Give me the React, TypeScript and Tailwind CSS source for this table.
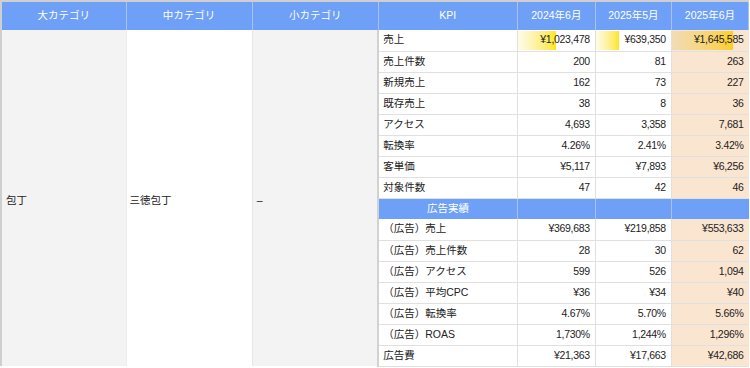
import type { CSSProperties } from 'react'

type Row = {
  label: string
  values: [string, string, string]
  bars?: [number, number, number]
}

const MAIN_ROWS: Row[] = [
  {
    label: '売上',
    values: ['¥1,023,478', '¥639,350', '¥1,645,585'],
    bars: [1023478, 639350, 1645585],
  },
  { label: '売上件数', values: ['200', '81', '263'] },
  { label: '新規売上', values: ['162', '73', '227'] },
  { label: '既存売上', values: ['38', '8', '36'] },
  { label: 'アクセス', values: ['4,693', '3,358', '7,681'] },
  { label: '転換率', values: ['4.26%', '2.41%', '3.42%'] },
  { label: '客単価', values: ['¥5,117', '¥7,893', '¥6,256'] },
  { label: '対象件数', values: ['47', '42', '46'] },
]

const AD_ROWS: Row[] = [
  { label: '（広告）売上', values: ['¥369,683', '¥219,858', '¥553,633'] },
  { label: '（広告）売上件数', values: ['28', '30', '62'] },
  { label: '（広告）アクセス', values: ['599', '526', '1,094'] },
  { label: '（広告）平均CPC', values: ['¥36', '¥34', '¥40'] },
  { label: '（広告）転換率', values: ['4.67%', '5.70%', '5.66%'] },
  { label: '（広告）ROAS', values: ['1,730%', '1,244%', '1,296%'] },
  { label: '広告費', values: ['¥21,363', '¥17,663', '¥42,686'] },
]

const FONT: CSSProperties = {
  fontFamily: '"Liberation Sans", "Noto Sans CJK JP", sans-serif',
}

const TH = 'h-[29px] bg-[#6fa0f7] text-center text-[10.5px] font-normal text-white border-x border-[#a9c2ec]'
const TD = 'h-[21px] border-b border-[#e0e0e0] p-0 text-[10.5px] text-[#222]'
const VAL = 'border-l border-[#e0e0e0] pr-[5px] text-right tracking-[-0.3px]'
const SIDE = 'pt-[6px] align-middle text-[10.5px] text-[#222]'

function ValueCell({ value, bar, max, last }: { value: string; bar?: number; max: number; last: boolean }) {
  return (
    <td className={`${TD} ${VAL} relative ${last ? 'bg-[#fae5d0]' : 'bg-white'}`}>
      {bar !== undefined ? (
        <span
          className={`absolute top-[1px] bottom-[1px] left-0 bg-gradient-to-r ${
            last ? 'from-[#f1dcb6] to-[#fccf1a]' : 'from-[#fdfbea] to-[#ffe500]'
          }`}
          style={{ width: `${(bar / max) * 80}%` }}
          aria-hidden="true"
        />
      ) : null}
      <span className="relative">{value}</span>
    </td>
  )
}

function DataRow({ row, first }: { row: Row; first?: boolean }) {
  const max = row.bars ? Math.max(...row.bars) : 1
  return (
    <tr>
      {first ? (
        <>
          <td rowSpan={16} className={`${SIDE} border-l-2 border-[#cfcfcf] bg-[#f3f3f3] pl-[4px]`}>
            包丁
          </td>
          <td rowSpan={16} className={`${SIDE} border-l border-[#ececec] bg-white pl-[3px]`}>
            三徳包丁
          </td>
          <td rowSpan={16} className={`${SIDE} border-l border-[#e6e6e6] bg-[#f3f3f3] pl-[4px]`}>
            –
          </td>
        </>
      ) : null}
      <td className={`${TD} border-l-2 border-l-[#d2d2d2] bg-white pl-[4px] text-left`}>{row.label}</td>
      {row.values.map((v, i) => (
        <ValueCell key={i} value={v} bar={row.bars?.[i]} max={max} last={i === 2} />
      ))}
    </tr>
  )
}

export default function App() {
  return (
    <div className="h-[368px] w-[750px] overflow-hidden bg-white" style={FONT}>
      <table className="w-[749px] table-fixed border-collapse border-t-2 border-[#cfcfcf]">
        <colgroup>
          <col className="w-[125px]" />
          <col className="w-[126px]" />
          <col className="w-[126px]" />
          <col className="w-[139px]" />
          <col className="w-[78px]" />
          <col className="w-[76px]" />
          <col className="w-[77px]" />
        </colgroup>
        <thead>
          <tr>
            <th className={`${TH} border-l-2 border-l-[#cfcfcf]`}>大カテゴリ</th>
            <th className={TH}>中カテゴリ</th>
            <th className={TH}>小カテゴリ</th>
            <th className={TH}>KPI</th>
            <th className={TH}>2024年6月</th>
            <th className={TH}>2025年5月</th>
            <th className={TH}>2025年6月</th>
          </tr>
        </thead>
        <tbody>
          {MAIN_ROWS.map((row, i) => (
            <DataRow key={row.label} row={row} first={i === 0} />
          ))}
          <tr>
            <td className="h-[21px] border-l-2 border-l-[#d2d2d2] bg-[#6fa0f7] p-0 text-center text-[10.5px] text-white">
              広告実績
            </td>
            <td className="h-[21px] border-l border-[#a9c2ec] bg-[#6fa0f7] p-0" />
            <td className="h-[21px] border-l border-[#a9c2ec] bg-[#6fa0f7] p-0" />
            <td className="h-[21px] border-l border-[#a9c2ec] bg-[#6fa0f7] p-0" />
          </tr>
          {AD_ROWS.map((row) => (
            <DataRow key={row.label} row={row} />
          ))}
        </tbody>
      </table>
    </div>
  )
}
